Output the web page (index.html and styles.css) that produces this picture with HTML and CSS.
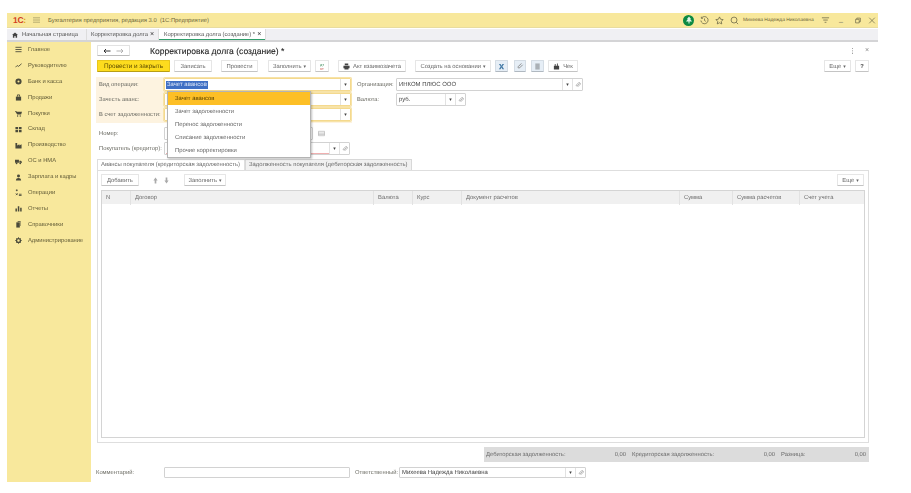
FILE: index.html
```html
<!DOCTYPE html>
<html lang="ru">
<head>
    <meta charset="UTF-8">
    <meta name="viewport" content="width=device-width, initial-scale=1.0">
    <title>Корректировка долга</title>
    <link rel="stylesheet" href="styles.css">
</head>
<body>
<div class="window">
    <header class="topbar">
        <span class="logo">1С<em>:</em></span>
        <svg class="burger" viewBox="0 0 8 6"><path d="M0 .5h8M0 3h8M0 5.500h8"/></svg>
        <span class="app-title">Бухгалтерия предприятия, редакция 3.0&nbsp; (1С:Предприятие)</span>
        <span class="spacer"></span>
        <span class="tree"><svg viewBox="0 0 8 8"><path d="M4 .5 6 3H5.200L7 5.500H4.500V7.500h-1V5.500H1L2.800 3H2z"/></svg></span>
        <svg class="top-ico" viewBox="0 0 10 10"><path d="M1.800 2.200A4 4 0 1 1 1 5M1.500.8v1.800h1.800M5 2.800V5l1.500 1"/></svg>
        <svg class="top-ico" viewBox="0 0 10 10"><path d="M5 1l1.200 2.600 2.800.4-2 2 .5 2.800L5 7.500 2.500 8.800 3 6 1 4l2.800-.4z"/></svg>
        <svg class="top-ico ico-search" viewBox="0 0 10 10"><circle cx="4.500" cy="4.500" r="3.300"/><path d="M7 7l2 2"/></svg>
        <span class="user">Михеева Надежда Николаевна</span>
        <svg class="top-ico ico-filter" viewBox="0 0 10 10"><path d="M1 2h8M2.500 4.500h5M4 7h2"/></svg>
        <span class="win-btn">_</span>
        <svg class="top-ico ico-restore" viewBox="0 0 10 10"><path d="M2 3.500h4.500V8H2zM3.500 3.500V2H8v4.500H6.500"/></svg>
        <svg class="top-ico ico-close" viewBox="0 0 10 10"><path d="M1.500 1.500l7 7M8.500 1.500l-7 7"/></svg>
    </header>

    <nav class="tabs">
        <a class="tab tab-home"><svg class="home" viewBox="0 0 8 8"><path d="M4 .5 8 4H6.800v3.500H4.800V5.300H3.200v2.200H1.200V4H0z"/></svg>Начальная страница</a>
        <a class="tab tab-doc">Корректировка долга <b>×</b></a>
        <a class="tab tab-active">Корректировка долга (создание) * <b>×</b></a>
    </nav>

    <div class="body">
        <aside class="sidebar">
            <div class="side-item"><svg viewBox="0 0 8 8"><path class="line" d="M.5 1.500h7M.5 4h7M.5 6.500h7"/></svg>Главное</div>
            <div class="side-item"><svg viewBox="0 0 8 8"><path class="line" d="M.5 6l2-2 1.500 1L7.500 2"/></svg>Руководителю</div>
            <div class="side-item"><svg viewBox="0 0 8 8"><circle cx="4" cy="4" r="3.500"/><circle class="hole" cx="4" cy="4" r="1.200"/></svg>Банк и касса</div>
            <div class="side-item"><svg viewBox="0 0 8 8"><path d="M1 3h6v4.500H1z"/><path class="line" d="M2.800 3V1h2.400v2"/></svg>Продажи</div>
            <div class="side-item"><svg viewBox="0 0 8 8"><path d="M0 1h1.500l.4 1H8L7 5H2.500z"/><circle cx="3" cy="6.800" r=".8"/><circle cx="6" cy="6.800" r=".8"/></svg>Покупки</div>
            <div class="side-item"><svg viewBox="0 0 8 8"><path d="M.5 1h3v2.700h-3zM4.500 1h3v2.700h-3zM.5 4.500h3v2.700h-3zM4.500 4.500h3v2.700h-3z"/></svg>Склад</div>
            <div class="side-item"><svg viewBox="0 0 8 8"><path d="M.5 1h2v3l2.500-1.500V4l2.500-1.500v5h-7z"/></svg>Производство</div>
            <div class="side-item"><svg viewBox="0 0 8 8"><path d="M0 2h4.500v3.500H0zM5 3h1.800L8 4.500v1H5z"/><circle cx="1.800" cy="6" r="1"/><circle cx="6" cy="6" r="1"/></svg>ОС и НМА</div>
            <div class="side-item"><svg viewBox="0 0 8 8"><circle cx="4" cy="2.200" r="1.700"/><path d="M1 7.500c0-2.200 1.300-3 3-3s3 .8 3 3z"/></svg>Зарплата и кадры</div>
            <div class="side-item"><svg viewBox="0 0 8 8"><path class="line" d="M1 1.500h2M2 .5v2M4.500 6h3M4.500 7.500h3M1 5l2 2M3 5 1 7"/></svg>Операции</div>
            <div class="side-item"><svg viewBox="0 0 8 8"><path d="M.5 4h1.700v3.500H.5zM3.200 1.500h1.700v6H3.200zM5.900 3h1.700v4.500H5.900z"/></svg>Отчеты</div>
            <div class="side-item"><svg viewBox="0 0 8 8"><path d="M1.500 1.500h4v6h-4z"/><path d="M3 .3h3.500v5.500H6V1H3z"/></svg>Справочники</div>
            <div class="side-item"><svg viewBox="0 0 8 8"><circle cx="4" cy="4" r="2.200" class="ring"/><path class="line" d="M4 .3v1.200M4 6.500v1.200M.3 4h1.200M6.500 4h1.200M1.400 1.400l.8.8M5.800 5.800l.8.8M6.600 1.400l-.8.8M2.200 5.800l-.8.8"/></svg>Администрирование</div>
        </aside>

        <main class="main">
            <div class="head-row">
                <div class="nav-group">
                    <svg class="nav-arrow" viewBox="0 0 8 6"><path d="M7.500 3H1M3 1 1 3l2 2"/></svg>
                    <svg class="nav-arrow nav-off" viewBox="0 0 8 6"><path d="M.5 3H7M5 1l2 2-2 2"/></svg>
                </div>
                <h1 class="doc-title">Корректировка долга (создание) *</h1>
                <span class="spacer"></span>
                <span class="head-ico">⋮</span>
                <span class="head-ico head-x">×</span>
            </div>

            <div class="toolbar">
                <button class="btn btn-main">Провести и закрыть</button>
                <button class="btn w-write">Записать</button>
                <button class="btn w-post">Провести</button>
                <button class="btn w-fill">Заполнить <i>▾</i></button>
                <button class="btn w-dtkt"><span class="dtkt">дт<br><em>кт</em></span></button>
                <button class="btn w-act"><svg class="btn-svg" viewBox="0 0 8 8"><path d="M2 .5h4v2H2zM.5 3h7v3H6.300v1.500H1.700V6H.5z"/></svg>Акт взаимозачета</button>
                <button class="btn w-base">Создать на основании <i>▾</i></button>
                <button class="btn btn-ico btn-blue w-ico1"><svg class="btn-svg svg-blue" viewBox="0 0 8 8"><path d="M1 1h2l1 2 1-2h2L5 4l2 3H5L4 5 3 7H1l2-3z"/></svg></button>
                <button class="btn btn-ico btn-blue w-ico2"><svg class="btn-svg svg-clip" viewBox="0 0 8 8"><path d="M6.500 2 3 5.500a1 1 0 0 1-1.500-1.500l3.500-3.500"/></svg></button>
                <button class="btn btn-ico btn-blue w-ico3"><svg class="btn-svg svg-gray" viewBox="0 0 8 8"><path d="M1.500 .5h5v7h-5z"/></svg></button>
                <button class="btn w-check"><svg class="btn-svg" viewBox="0 0 8 8"><path d="M1 3h6v4.500H1zM2 1h1v2H2zM4.500 .5h1v2.500h-1z"/></svg>Чек</button>
                <span class="spacer"></span>
                <button class="btn w-more">Еще <i>▾</i></button>
                <button class="btn w-help"><b>?</b></button>
            </div>

            <section class="form">
                <div class="form-top">
                    <div class="mark-block">
                        <div class="row">
                            <label class="lbl">Вид операции:</label>
                            <div class="field f-op"><span class="selected">Зачет авансов</span><span class="grow"></span><span class="drop">▾</span></div>
                        </div>
                        <div class="row">
                            <label class="lbl">Зачесть аванс:</label>
                            <div class="field f-op"><span class="grow"></span><span class="drop">▾</span></div>
                        </div>
                        <div class="row">
                            <label class="lbl">В счет задолженности:</label>
                            <div class="field f-op"><span class="grow"></span><span class="drop">▾</span></div>
                        </div>
                    </div>
                    <div class="org-block">
                        <div class="row">
                            <label class="lbl lbl-org">Организация:</label>
                            <div class="field f-org"><span class="val-dark">ИНКОМ ПЛЮС ООО</span><span class="grow"></span><span class="drop">▾</span><span class="link"><svg viewBox="0 0 8 8"><path d="M6 2 3 5a.8.8 0 0 1-1.200-1.200L5 1a1.500 1.500 0 0 1 2 2L3.500 6.500"/></svg></span></div>
                        </div>
                        <div class="row">
                            <label class="lbl lbl-org">Валюта:</label>
                            <div class="field f-cur"><span class="val-dark">руб.</span><span class="grow"></span><span class="drop">▾</span><span class="link"><svg viewBox="0 0 8 8"><path d="M6 2 3 5a.8.8 0 0 1-1.200-1.200L5 1a1.500 1.500 0 0 1 2 2L3.500 6.500"/></svg></span></div>
                        </div>
                    </div>
                </div>
                <div class="row row-num">
                    <label class="lbl">Номер:</label>
                    <div class="field f-num"></div>
                    <svg class="cal" viewBox="0 0 8 8"><path d="M.5 1.500h7v5h-7zM.5 3.500h7M.5 5h7"/></svg>
                </div>
                <div class="row">
                    <label class="lbl">Покупатель (кредитор):</label>
                    <div class="field f-buyer"><span class="grow need"></span><span class="drop">▾</span><span class="link"><svg viewBox="0 0 8 8"><path d="M6 2 3 5a.8.8 0 0 1-1.200-1.200L5 1a1.500 1.500 0 0 1 2 2L3.500 6.500"/></svg></span></div>
                </div>

                <ul class="menu">
                    <li class="menu-on">Зачет авансов</li>
                    <li>Зачет задолженности</li>
                    <li>Перенос задолженности</li>
                    <li>Списание задолженности</li>
                    <li>Прочие корректировки</li>
                </ul>
            </section>

            <div class="page-tabs">
                <a class="ptab ptab-on">Авансы покупателя (кредиторская задолженность)</a>
                <a class="ptab">Задолженность покупателя (дебиторская задолженность)</a>
            </div>
            <section class="panel">
                <div class="panel-bar">
                    <button class="btn w-add">Добавить</button>
                    <div class="arrows">
                        <svg viewBox="0 0 6 8"><path d="M3 .5 5.500 4H4v3.500H2V4H.5z"/></svg>
                        <svg viewBox="0 0 6 8"><path d="M3 7.500 5.500 4H4V.5H2V4H.5z"/></svg>
                    </div>
                    <button class="btn w-fill2">Заполнить <i>▾</i></button>
                    <span class="spacer"></span>
                    <button class="btn w-more">Еще <i>▾</i></button>
                </div>
                <div class="grid">
                    <div class="grid-head">
                        <span>N</span>
                        <span>Договор</span>
                        <span>Валюта</span>
                        <span>Курс</span>
                        <span>Документ расчетов</span>
                        <span>Сумма</span>
                        <span>Сумма расчетов</span>
                        <span>Счет учета</span>
                    </div>
                </div>
            </section>

            <div class="totals">
                <span class="t-lbl t1">Дебиторская задолженность:</span><span class="t-val">0,00</span>
                <span class="t-lbl t2">Кредиторская задолженность:</span><span class="t-val">0,00</span>
                <span class="t-lbl t3">Разница:</span><span class="t-val">0,00</span>
            </div>
            <div class="row row-comment">
                <label class="lbl">Комментарий:</label>
                <div class="field f-comment"></div>
                <label class="lbl lbl-resp">Ответственный:</label>
                <div class="field f-resp"><span class="val-dark">Михеева Надежда Николаевна</span><span class="grow"></span><span class="drop">▾</span><span class="link"><svg viewBox="0 0 8 8"><path d="M6 2 3 5a.8.8 0 0 1-1.200-1.200L5 1a1.500 1.500 0 0 1 2 2L3.500 6.500"/></svg></span></div>
            </div>
        </main>
    </div>
</div>
</body>
</html>
```

FILE: styles.css
```css
html, body { margin: 0; padding: 0; background: #fff; }
body { font-family: "Liberation Sans", Arial, sans-serif; font-size: 5.800px; color: #666; height: 493px; overflow: hidden; text-rendering: geometricPrecision; }
svg { display: block; }
.spacer, .grow { flex: 1; }

.window { width: 871px; height: 469px; margin: 13px 0 0 7px; display: flex; flex-direction: column; filter: blur(.3px); }

.topbar { height: 14px; background: #f8e89c; border-bottom: 1px solid #e8dca0; display: flex; align-items: center; color: #6b6538; flex: none; }
.logo { width: 15px; margin-left: 6px; font-size: 8.500px; font-weight: bold; color: #d2401f; letter-spacing: -.3px; }
.logo em { font-style: normal; color: #e0a010; }
.burger { width: 7px; height: 6px; margin-left: 5px; fill: none; stroke: #8a8458; stroke-width: .7; }
.app-title { margin-left: 8px; padding-top: 1px; font-size: 5.850px; }
.tree { width: 11px; height: 11px; border-radius: 50%; background: #0c8a43; display: flex; align-items: center; justify-content: center; margin-right: 6px; }
.tree svg { width: 8px; height: 8px; fill: #dff3e6; }
.top-ico { width: 9px; height: 9px; fill: none; stroke: #5f5c40; stroke-width: .8; margin-right: 6px; }
.ico-search { margin-right: 4px; }
.user { font-size: 4.900px; width: 73px; color: #6a6236; margin-right: 5px; white-space: nowrap; }
.ico-filter { margin-right: 9px; }
.win-btn { width: 8px; margin-right: 7px; font-size: 7px; line-height: 6px; color: #555; }
.ico-restore { margin-right: 6px; width: 8px; }
.ico-close { margin-right: 2px; width: 8px; }

.tabs { height: 11px; background: #f0f0f3; border-bottom: 2px solid #d4d4d6; margin-top: 1px; display: flex; flex: none; }
.tab { display: flex; align-items: center; font-size: 5.800px; color: #555; white-space: nowrap; box-sizing: border-box; }
.tab b { font-weight: normal; font-size: 7px; color: #333; margin-left: 2px; }
.home { width: 6px; height: 6px; fill: #444; margin: 0 4px 0 5px; }
.tab-home { width: 80px; border-right: 1px solid #ddd; }
.tab-doc { width: 72px; padding-left: 4px; border-right: 1px solid #ddd; }
.tab-active { width: 107px; padding-left: 5px; background: #fff; border-right: 1px solid #ddd; box-shadow: inset 0 -1px 0 #2f9e6a; }

.body { flex: 1; display: flex; min-height: 0; }
.sidebar { width: 84px; background: #f8e89c; flex: none; }
.side-item { height: 15.900px; display: flex; align-items: center; color: #605a36; font-size: 5.800px; padding-left: 8px; white-space: nowrap; }
.side-item svg { width: 7px; height: 7px; margin-right: 6px; fill: #4a4a3a; flex: none; }
.side-item svg .line { fill: none; stroke: #4a4a3a; stroke-width: 1; }
.side-item svg .hole { fill: #f8e89c; }
.side-item svg .ring { fill: none; stroke: #4a4a3a; stroke-width: 1.500; }

.main { flex: 1; padding: 3px 9px 0 6px; background: #fff; position: relative; min-width: 0; }

.head-row { height: 11px; display: flex; align-items: center; }
.nav-group { width: 33px; height: 11px; border: 1px solid #e2e2e2; border-bottom-color: #bbb; box-sizing: border-box; display: flex; align-items: center; justify-content: space-around; padding: 0 3px; border-radius: 1px; }
.nav-arrow { width: 8px; height: 6px; fill: none; stroke: #222; stroke-width: .9; }
.nav-off { stroke: #aaa; }
.doc-title { margin: 0 0 0 20px; font-size: 8.550px; font-weight: normal; color: #222; -webkit-text-stroke: .1px #222; white-space: nowrap; }
.head-ico { font-size: 7px; color: #555; margin-right: 9px; }
.head-x { margin-right: 0; color: #888; }

.toolbar { height: 12px; margin-top: 4px; display: flex; align-items: stretch; }
.btn { box-sizing: border-box; height: 12px; padding: 1px 0 0; font: inherit; font-size: 5.850px; text-rendering: inherit; color: #666; background: #fff; border: 1px solid #e6e6e6; border-bottom: 1px solid #c4c4c4; border-radius: 1px; white-space: nowrap; display: flex; align-items: center; justify-content: center; flex: none; }
.btn i { font-style: normal; font-size: 5px; margin-left: 2px; }
.btn-main { width: 73px; font-size: 6.400px; background: #fddc1e; border-color: #e8c61a; border-bottom-color: #b89e14; color: #5c4a00; }
.w-write { width: 38px; margin-left: 4px; }
.w-post { width: 37px; margin-left: 9px; }
.w-fill { width: 43px; margin-left: 10px; }
.w-dtkt { width: 14px; margin-left: 4px; }
.dtkt { font-size: 4px; line-height: 4px; color: #3a8a5a; text-align: center; }
.dtkt em { font-style: normal; color: #c8504a; }
.w-act { width: 68px; margin-left: 9px; }
.w-base { width: 76px; margin-left: 9px; }
.w-ico1 { width: 13px; margin-left: 4px; }
.w-ico2 { width: 12px; margin-left: 6px; }
.w-ico3 { width: 13px; margin-left: 5px; }
.w-check { width: 30px; margin-left: 4px; }
.w-more { width: 27px; }
.w-help { width: 14px; margin-left: 4px; color: #444; }
.btn-blue { background: #e6eef6; border-color: #d4dce4; border-bottom-color: #b0b8c0; }
.btn-svg { width: 7px; height: 7px; fill: #444; margin-right: 3px; }
.btn-ico .btn-svg { margin-right: 0; }
.svg-blue { fill: #4a7ea8; }
.svg-clip { fill: none; stroke: #777; stroke-width: .9; }
.svg-gray { fill: #aab0b6; }

.form { margin-top: 5px; position: relative; }
.form-top { display: flex; align-items: flex-start; }
.mark-block { width: 256px; height: 46px; margin-left: -1px; padding: 1px 0 0 1px; background: #fdf3e0; box-sizing: border-box; flex: none; }
.org-block { padding-top: 1px; margin-left: 5px; }
.row { height: 15px; display: flex; align-items: flex-start; }
.lbl { width: 67px; flex: none; font-size: 5.800px; line-height: 15px; padding-left: 2px; color: #6c6c64; white-space: nowrap; box-sizing: border-box; }
.lbl-org { width: 39px; padding-left: 0; }
.field { box-sizing: border-box; height: 13px; border: 1px solid #d2d2d2; background: #fff; display: flex; align-items: stretch; line-height: 12px; padding-left: 1px; color: #555; font-size: 5.950px; flex: none; border-radius: 1px; }
.f-op { width: 187px; border-color: #f4d98e; outline: 1px solid #f7e3a8; }
.f-org { width: 187px; }
.f-cur { width: 70px; }
.f-num { width: 149px; }
.f-buyer { width: 186px; }
.f-comment { width: 186px; }
.f-resp { width: 187px; }
.selected { background: #3f6fc4; color: #dbe4f5; padding: 0 1px; height: 8px; line-height: 8px; margin-top: 1.500px; }
.val-dark { color: #444; padding-left: 1px; }
.drop { width: 9px; border-left: 1px solid #e2e2e2; font-size: 5px; text-align: center; color: #444; }
.link { width: 9px; border-left: 1px solid #e2e2e2; display: flex; align-items: center; justify-content: center; }
.link svg { width: 6px; height: 6px; fill: none; stroke: #888; stroke-width: .8; }
.need { border-bottom: 1px solid #f0b0b0; }

.row-num { margin-top: 4px; }
.cal { width: 7px; height: 7px; margin: 3px 0 0 5px; fill: none; stroke: #aaa; stroke-width: .7; }

.menu { position: absolute; left: 70px; top: 14px; width: 144px; height: 67px; margin: 0; padding: 0; list-style: none; background: #fff; border: 1px solid #b4b4b4; box-shadow: 1px 1px 2px rgba(0, 0, 0, .25); box-sizing: border-box; font-size: 5.900px; color: #666; }
.menu li { height: 13px; line-height: 14px; padding-left: 7px; }
.menu .menu-on { background: #fdbf26; color: #5a4300; }

.page-tabs { display: flex; height: 11px; margin-top: 2px; }
.ptab { box-sizing: border-box; font-size: 5.900px; line-height: 11px; padding-left: 3px; border: 1px solid #d8d8d8; border-bottom: 0; background: #f1f1f1; color: #6a6a6a; white-space: nowrap; }
.ptab-on { width: 148px; background: #fff; border-color: #dedede; }
.ptab + .ptab { width: 167px; }
.panel { box-sizing: border-box; width: 772px; height: 273px; border: 1px solid #dedede; padding: 3px 3px 4px 3px; display: flex; flex-direction: column; }
.panel-bar { height: 12px; display: flex; flex: none; }
.w-add { width: 38px; }
.arrows { width: 26px; margin-left: 9px; display: flex; align-items: center; justify-content: center; gap: 6px; }
.arrows svg { width: 5px; height: 7px; fill: #aaa; }
.w-fill2 { width: 42px; margin-left: 10px; }
.panel-bar .w-more { margin-right: 1px; }
.grid { flex: 1; margin-top: 4px; border: 1px solid #d4d4d4; }
.grid-head { height: 13px; background: #f0f0f0; display: grid; grid-template-columns: 29px 243px 39px 49px 218px 53px 67px 1fr; font-size: 5.850px; line-height: 14px; color: #6c6c6c; }
.grid-head span { padding-left: 4px; border-right: 1px solid #e2e2e2; white-space: nowrap; }
.grid-head span:last-child { border-right: 0; }

.totals { box-sizing: border-box; width: 385px; height: 15px; margin: 4px 0 0 387px; background: #dcdcdc; display: flex; font-size: 5.850px; line-height: 16px; color: #6a6a6a; white-space: nowrap; }
.t-lbl { padding-left: 2px; box-sizing: border-box; }
.t1 { width: 102px; }
.t2 { width: 105px; margin-left: 4px; }
.t3 { width: 47px; margin-left: 4px; }
.t-val { width: 40px; text-align: right; }

.row-comment { margin-top: 5px; margin-left: -1px; }
.row-comment .lbl { padding-left: 0; width: 68px; line-height: 12px; }
.row-comment .field { height: 11px; line-height: 10px; }
.row-comment .lbl-resp { width: 44px; margin-left: 5px; }
```
